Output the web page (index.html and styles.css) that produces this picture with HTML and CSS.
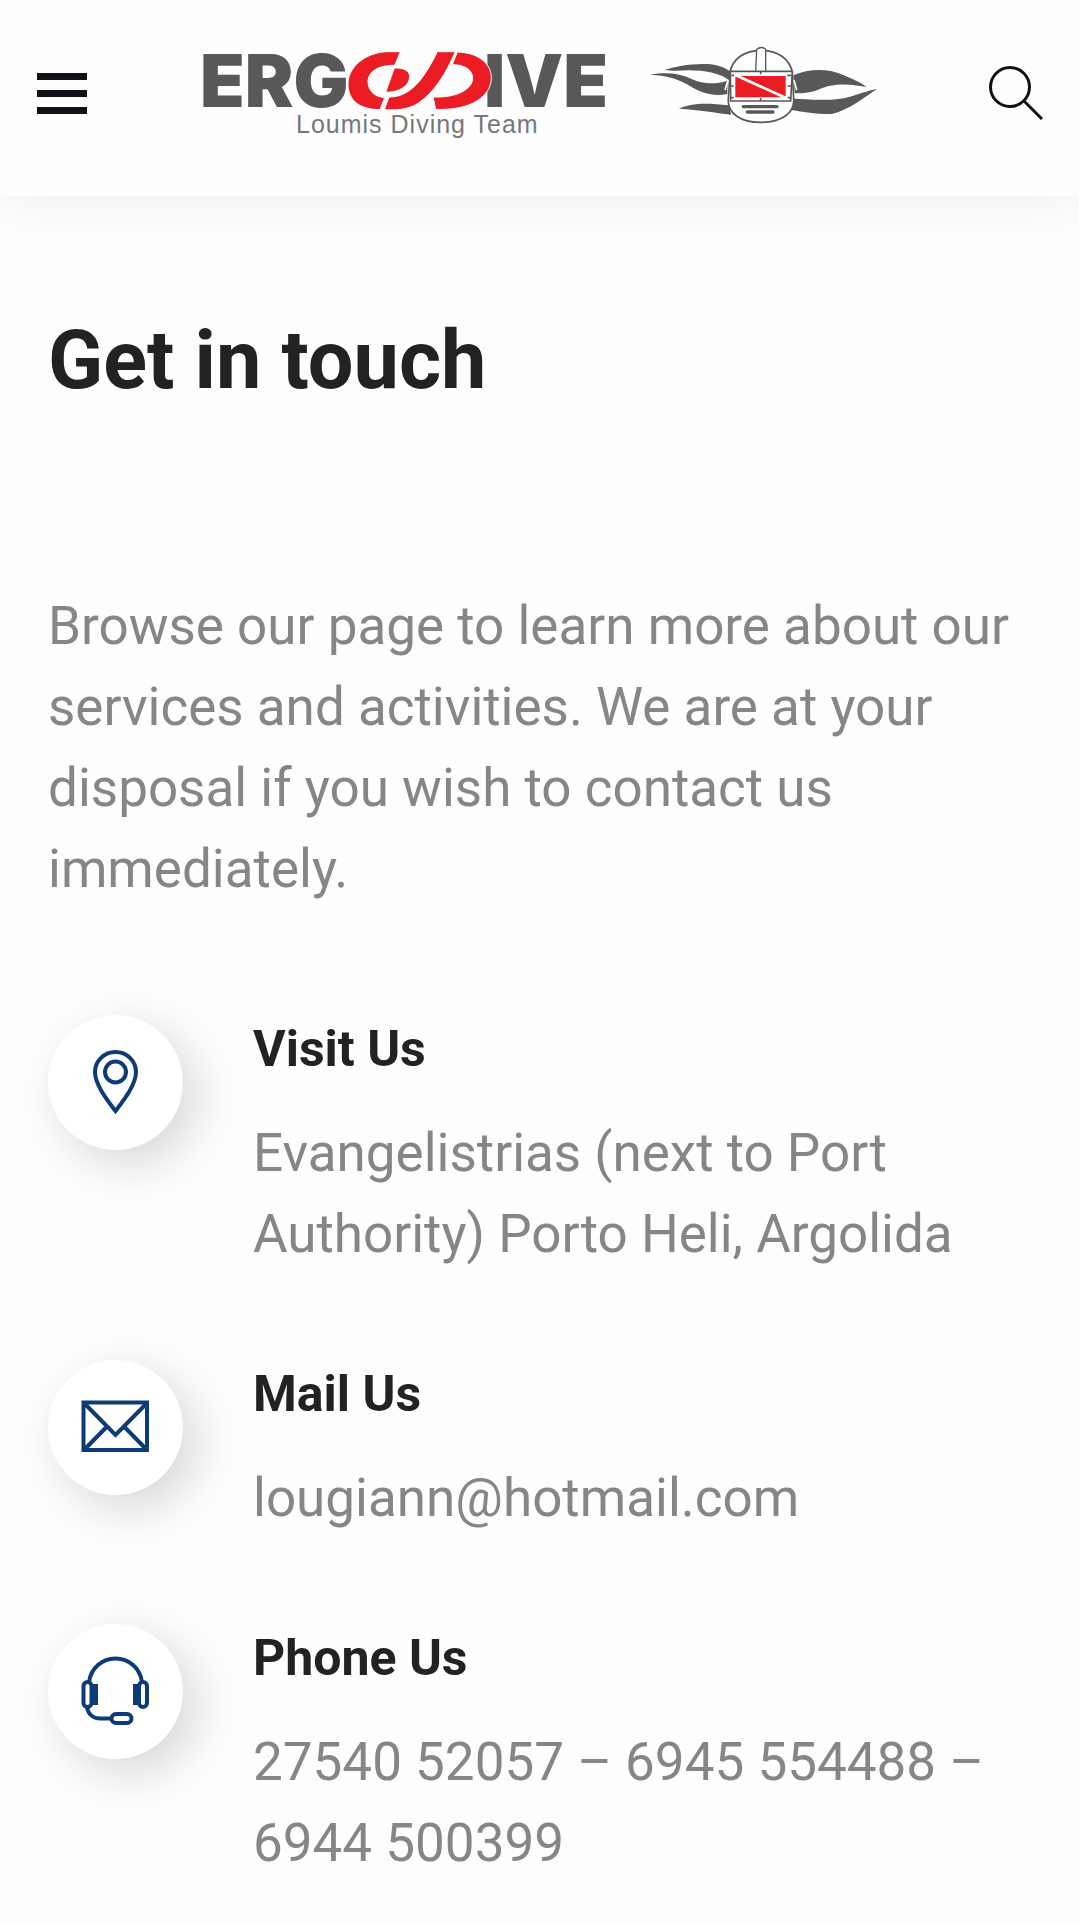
FILE: index.html
```html
<!DOCTYPE html>
<html lang="en">
  <head>
    <meta charset="UTF-8" />
    <meta name="viewport" content="width=device-width, initial-scale=1.0" />
    <title>Ergodive - Contact</title>
    <link rel="stylesheet" href="styles.css">
  </head>
  <body>
    <header class="site-header">
      <button class="menu-button" aria-label="Menu">
        <span></span>
        <span></span>
        <span></span>
      </button>
      <a href="#" class="logo" aria-label="Ergodive">
        <svg viewBox="198 23 680 140">
          <text class="logo-name" x="200" y="107">ERG</text>
          <text class="logo-name" x="484" y="107">IVE</text>
          <text class="logo-tagline" x="296" y="133">Loumis Diving Team</text>
          <!-- O and D ribbons -->
          <g transform="translate(340 40) scale(0.33333)" fill="#ec1c24" stroke="#fff" stroke-width="3">
            <path d="M181 35H140C75 38 22 82 24 135C26 180 55 208 120 209L134 172C103 172 84 150 84 124C85 95 115 75 164 76Z" />
            <path d="M163 84C190 82 210 93 209 110C208 137 180 157 137 157Z" />
            <path d="M292 35H346C318 100 285 155 234 190C205 209 170 211 133 209L147 171C190 172 224 145 250 108C268 82 280 60 292 35Z" />
            <path d="M352 36C415 38 453 70 454 112C455 170 390 213 287 208L279 171C350 174 397 148 398 115C398 87 370 74 337 74Z" />
          </g>
          <!-- diving mask with fins -->
          <g transform="translate(630 30) scale(0.33333)">
            <g fill="#58585a">
              <path d="M104 119C140 110 170 101 230 102C262 103 285 112 302 126L296 150C270 130 225 121 175 121C150 122 125 124 104 119Z" />
              <path d="M60 134C110 126 150 130 185 147C220 163 255 164 292 152V192C250 200 215 190 180 168C145 147 110 136 60 134Z" />
              <path d="M147 236C180 220 225 217 296 226L304 254C255 248 210 240 147 236Z" />
              <path d="M490 136C540 113 600 116 640 135C672 149 695 158 709 171C650 158 600 162 570 177C545 188 520 190 494 190Z" />
              <path d="M484 205C560 212 625 212 670 197C700 187 720 181 742 176C705 200 660 238 606 252C565 254 525 246 484 240Z" />
            </g>
            <path d="M300 128C306 88 342 61 394 61S481 90 487 128L491 208C493 250 455 276 394 277S292 250 295 208Z" fill="#fff" stroke="#58585a" stroke-width="5" />
            <path d="M377 126L380 58Q394 47 407 58V126" fill="#fff" stroke="#58585a" stroke-width="4" />
            <path d="M301 124H487L482 213H302Z" fill="#fff" stroke="#58585a" stroke-width="5" />
            <path d="M316 138H467V202H316Z" fill="#ec1c24" />
            <path d="M314 134L470 205" stroke="#fff" stroke-width="8" />
            <path d="M340 230H441M352 246H429" stroke="#58585a" stroke-width="10" stroke-linecap="round" />
            <path d="M285 180L294 150M500 180L492 150" stroke="#fff" stroke-width="5" />
            <path d="M392 124V133M392 204V213M303 168H311M473 168H483M304 136H312M472 136H484M303 203H311M473 203H482" stroke="#58585a" stroke-width="5" />
          </g>
        </svg>
      </a>
      <button class="search-button" aria-label="Search">
        <svg viewBox="0 0 54 54" fill="none" stroke="#111" stroke-width="3">
          <circle cx="21" cy="21" r="19.5" />
          <path d="M35 35L53 53" />
        </svg>
      </button>
    </header>

    <main class="contact">
      <h1>Get in touch</h1>
      <p class="intro">Browse our page to learn more about our services and activities. We are at your disposal if you wish to contact us immediately.</p>

      <div class="contact-list">
        <section class="contact-item">
          <div class="contact-icon">
            <svg viewBox="0 0 135 135">
              <path d="M67.500 96C60 86 47 70 47 57A20.500 20 0 0 1 88 57C88 70 75 86 67.500 96Z" />
              <circle cx="67.500" cy="57" r="10.500" />
            </svg>
          </div>
          <div class="contact-text">
            <h2>Visit Us</h2>
            <p>Evangelistrias (next to Port Authority) Porto Heli, Argolida</p>
          </div>
        </section>

        <section class="contact-item">
          <div class="contact-icon">
            <svg viewBox="0 0 135 135">
              <path d="M35.500 42.500H99V90H35.500ZM36 43L67.500 75L99 43M36 90L58.500 67M99 90L76.500 67" />
            </svg>
          </div>
          <div class="contact-text">
            <h2>Mail Us</h2>
            <p><a href="mailto:lougiann@hotmail.com">lougiann@hotmail.com</a></p>
          </div>
        </section>

        <section class="contact-item">
          <div class="contact-icon">
            <svg viewBox="0 0 135 135">
              <path d="M41 58C43 44 54 34.500 67.500 34.500S92 44 94 58" />
              <rect x="35.500" y="58" width="8" height="25" rx="4" />
              <rect x="91" y="58" width="8" height="25" rx="4" />
              <path class="filled" d="M44 62H48V79H44ZM87 62H91V79H87Z" />
              <path d="M39 83C40 90 45 94.500 52 94.500H63" />
              <rect x="63.500" y="90" width="20" height="9" rx="4.500" />
            </svg>
          </div>
          <div class="contact-text">
            <h2>Phone Us</h2>
            <p>27540 52057 – 6945 554488 – 6944 500399</p>
          </div>
        </section>
      </div>
    </main>
  </body>
</html>
```
FILE: styles.css
```css
* {
  box-sizing: border-box;
}
body {
  margin: 0;
  background-color: #fefefe;
  color: #868686;
  font-family: Roboto, "Liberation Sans", sans-serif;
  font-size: 53px;
  line-height: 81px;
}
h1,
h2,
p {
  margin: 0;
}
h1,
h2 {
  color: #222;
  font-weight: 700;
}
a {
  color: inherit;
  text-decoration: none;
}
button {
  padding: 0;
  border: none;
  background: none;
  cursor: pointer;
}
svg {
  display: block;
  width: 100%;
}

/* header */
.site-header {
  display: flex;
  align-items: center;
  justify-content: space-between;
  padding: 23px 36px 33px 37px;
  background-color: #fefefe;
  box-shadow: 0 10px 50px rgba(0, 0, 0, 0.06);
}
.menu-button {
  display: flex;
  flex-direction: column;
  gap: 10px;
  width: 50px;
}
.menu-button span {
  height: 7px;
  background-color: #111118;
}
.logo {
  width: 680px;
}
.logo-name {
  font-family: Inter, "Liberation Sans", sans-serif;
  font-size: 73px;
  font-weight: 900;
  fill: #58585a;
}
.logo-tagline {
  font-family: "Liberation Sans", sans-serif;
  font-size: 25px;
  letter-spacing: 1px;
  fill: #77777a;
}
.search-button {
  width: 54px;
}

/* contact details */
.contact {
  padding: 116px 48px 48px;
}
h1 {
  font-size: 81px;
  line-height: 98px;
}
.intro {
  margin-top: 176px;
}
.contact-list {
  display: flex;
  flex-direction: column;
  gap: 85px;
  margin-top: 105px;
}
.contact-item {
  display: flex;
  gap: 70px;
}
.contact-icon {
  flex: none;
  width: 135px;
  height: 135px;
  border-radius: 50%;
  background-color: #fff;
  box-shadow: 14px 14px 50px rgba(0, 0, 0, 0.16);
}
.contact-icon svg {
  fill: none;
  stroke: #0d3b78;
  stroke-width: 4;
}
.contact-icon .filled {
  fill: #0d3b78;
}
.contact-text {
  padding-top: 4px;
}
h2 {
  margin-bottom: 34px;
  font-size: 50px;
  line-height: 60px;
}
```
